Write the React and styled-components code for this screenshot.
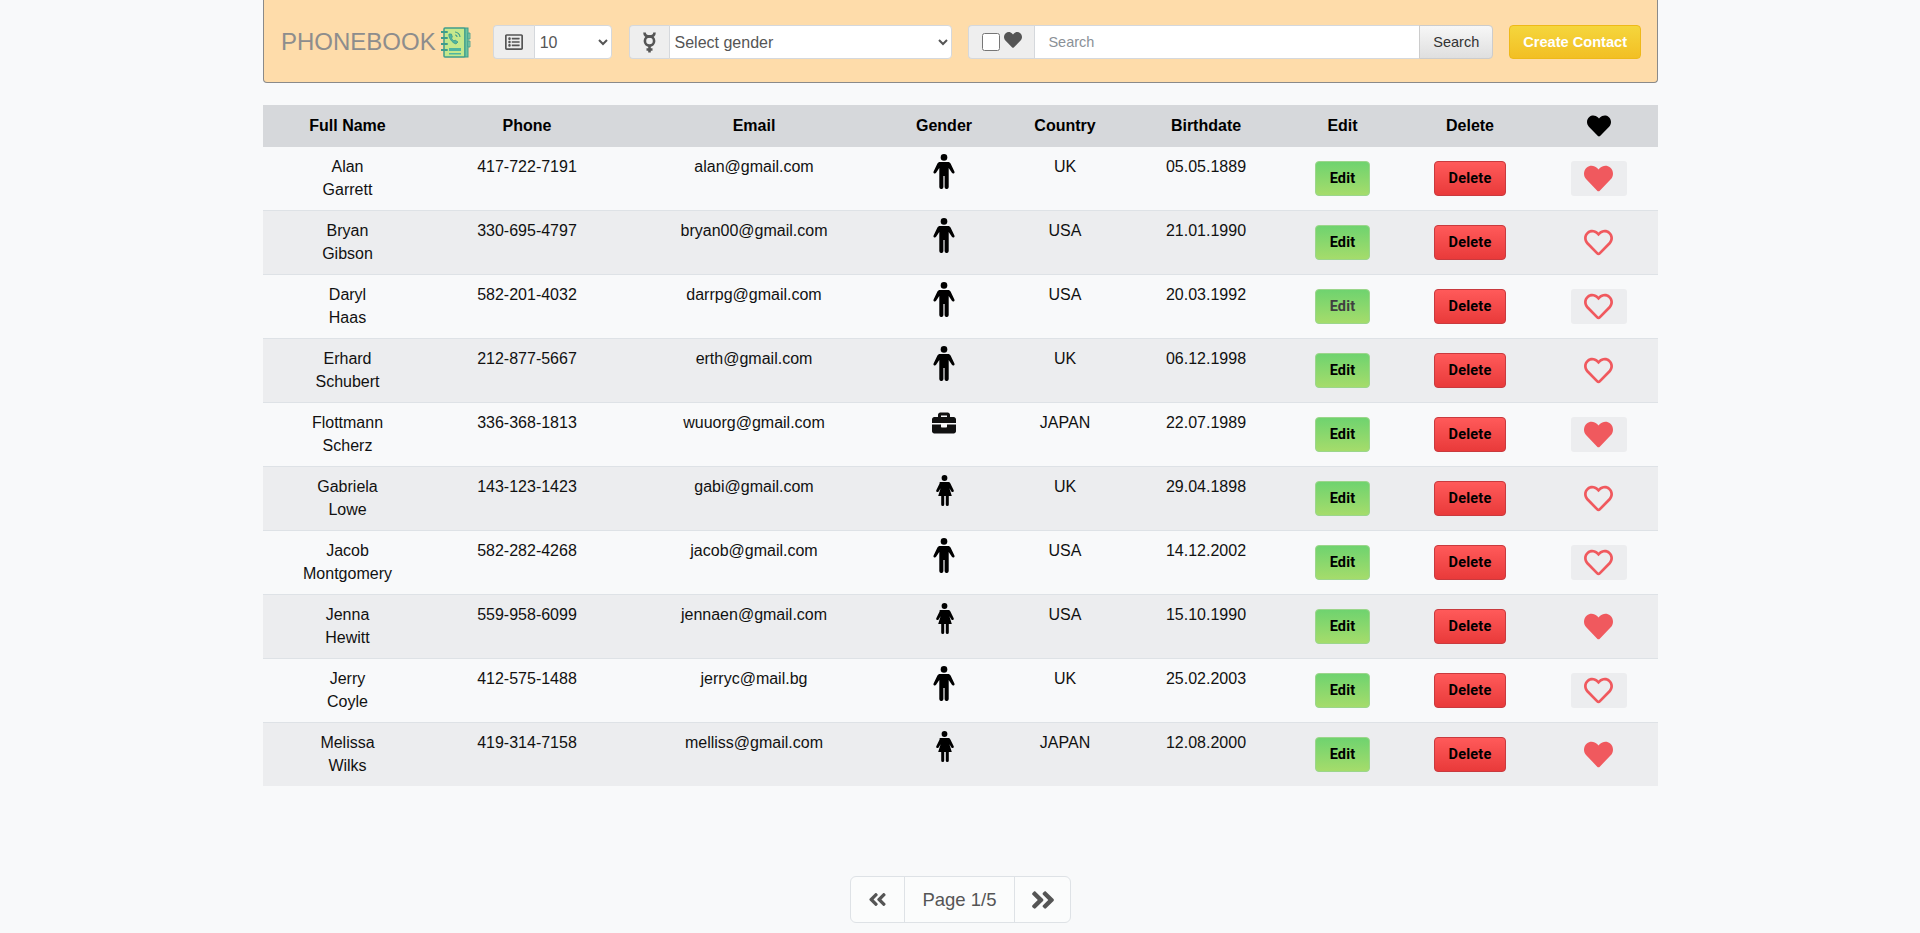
import React from 'react';
import styled, { createGlobalStyle } from 'styled-components';
import {
  FaRegListAlt,
  FaHeart,
  FaRegHeart,
  FaBriefcase,
  FaAngleDoubleLeft,
  FaAngleDoubleRight,
} from 'react-icons/fa';

const GlobalStyle = createGlobalStyle`
  html, body {
    margin: 0;
    padding: 0;
    background: #f8f9fa;
    font-family: "Liberation Sans", Arial, sans-serif;
    font-size: 16px;
    line-height: 1.5;
    color: #212529;
    overflow: hidden;
  }
`;

const Page = styled.div`
  width: 1395px;
  height: 933px;
  margin-left: 263px;
  display: flex;
  flex-direction: column;
`;

const Navbar = styled.nav`
  height: 83px;
  box-sizing: border-box;
  display: flex;
  align-items: center;
  padding: 2px 16px 0 17px;
  background: #fedcaa;
  border: 1px solid #8a8a8a;
  border-top: none;
  border-radius: 0 0 4px 4px;
`;

const Brand = styled.div`
  display: flex;
  align-items: center;
  gap: 5px;
  font-size: 24px;
  line-height: 30px;
  color: #8d8d8d;
  margin-right: 22px;
`;

const InputGroup = styled.div`
  display: flex;
  align-items: stretch;
  width: ${props => props.width}px;
  height: 34px;
  margin-right: ${props => props.gap}px;
  border-radius: 4px;
`;

const Addon = styled.div`
  width: ${props => props.width}px;
  box-sizing: border-box;
  flex: none;
  display: flex;
  align-items: center;
  justify-content: center;
  gap: ${props => props.gap || 0}px;
  background: #eeeeee;
  border: 1px solid #d5d8dc;
  border-right: none;
  border-radius: 4px 0 0 4px;
  color: #555;
  font-size: ${props => props.size || 16}px;
`;

const Select = styled.select`
  flex: 1;
  min-width: 0;
  height: 34px;
  box-sizing: border-box;
  padding: 0 0 0 1px;
  background: #fff;
  border: 1px solid #d5d8dc;
  border-radius: 0 4px 4px 0;
  font-family: inherit;
  font-size: 16px;
  color: #555;
  outline: none;
`;

const SearchInput = styled.input`
  flex: 1;
  min-width: 0;
  height: 34px;
  box-sizing: border-box;
  padding: 0 13px;
  background: #fff;
  border: 1px solid #d5d8dc;
  border-right: none;
  font-family: inherit;
  font-size: 14.5px;
  outline: none;

  &::placeholder {
    color: #8b9197;
    opacity: 1;
  }
`;

const SearchButton = styled.button`
  width: 74px;
  flex: none;
  padding: 0;
  background: linear-gradient(#f7f7f7, #dfdfdf);
  border: 1px solid #ccc;
  border-radius: 0 4px 4px 0;
  font-family: inherit;
  font-size: 14.5px;
  color: #333;
`;

const FavCheck = styled.input`
  width: 18px;
  height: 18px;
  margin: 0;
`;

const CreateButton = styled.button`
  width: 133px;
  height: 34px;
  padding: 0;
  background: linear-gradient(#f5d63d, #f2bf24);
  border: 1px solid #eeb919;
  border-radius: 4px;
  font-family: inherit;
  font-size: 14.6px;
  font-weight: 700;
  color: #fff;
`;

const Table = styled.table`
  width: 100%;
  margin-top: 22px;
  border-collapse: collapse;
  table-layout: fixed;
  text-align: center;
`;

const HeadRow = styled.tr`
  height: 42px;
  background: #d6d8db;
`;

const Th = styled.th`
  padding: 0 ${props => props.$right || 0}px 0 ${props => props.$left || 0}px;
  font-weight: 700;
  color: #000;
  vertical-align: middle;
`;

const Row = styled.tr`
  height: ${props => (props.$first ? 63 : 64)}px;
  background: ${props => (props.$striped ? '#ecedef' : 'transparent')};
  border-top: ${props => (props.$first ? 'none' : '1px solid #dee2e6')};
`;

const Td = styled.td`
  padding: 8px ${props => props.$right || 0}px 0 ${props => props.$left || 0}px;
  line-height: 23px;
  vertical-align: top;
  color: #111;
`;

const GenderCell = styled(Td)`
  padding-top: 7px;
  line-height: 0;
`;

const ActionCell = styled(Td)`
  padding-top: 14px;
  line-height: 0;
`;

const EditButton = styled.button`
  width: 55px;
  height: 35px;
  padding: 0;
  background: linear-gradient(#6fd36f, #a5dc6b);
  border: 1px solid #9bd68b;
  border-radius: 4px;
  font-family: Roboto, sans-serif;
  font-size: 14.5px;
  font-weight: 700;
  letter-spacing: 0.2px;
  color: ${props => (props.$muted ? '#404040' : '#000')};
`;

const DeleteButton = styled.button`
  width: 72px;
  height: 35px;
  padding: 0;
  background: linear-gradient(#ff5a5a, #e93a3a);
  border: 1px solid #c93a3e;
  border-radius: 4px;
  font-family: Roboto, sans-serif;
  font-size: 14.5px;
  font-weight: 700;
  letter-spacing: 0.2px;
  color: #000;
`;

const HeartButton = styled.button`
  width: 56px;
  height: 35px;
  padding: 0;
  display: inline-flex;
  align-items: center;
  justify-content: center;
  background: #ecedef;
  border: none;
  border-radius: 3px;
  color: #f0595e;
  font-size: 29px;
`;

const Pager = styled.div`
  align-self: center;
  display: flex;
  height: 47px;
  margin-top: 90px;
  box-sizing: border-box;
  border: 1px solid #dee2e6;
  border-radius: 6px;
  background: #fbfcfc;
  color: #555;
  font-size: 18.5px;
`;

const PagerArrow = styled.div`
  width: ${props => props.width}px;
  display: flex;
  align-items: center;
  justify-content: center;
  font-size: ${props => props.size}px;
`;

const PagerLabel = styled.div`
  width: 109px;
  display: flex;
  align-items: center;
  justify-content: center;
  border-left: 1px solid #dee2e6;
  border-right: 1px solid #dee2e6;
`;

const BookLogo = () => (
  <svg width="30" height="31" viewBox="0 0 30 31">
    <rect x="3" y="1" width="21" height="29" rx="1" fill="#c6e88c" stroke="#3f9c8c" strokeWidth="1.5" />
    <rect x="24" y="1" width="3" height="29" fill="#6cc4a0" stroke="#3f9c8c" strokeWidth="1" />
    <path d="M27 6h2v6h-2zM27 14h2v6h-2z" fill="#8ed0a8" stroke="#3f9c8c" strokeWidth="0.8" />
    <path d="M0 5h6M0 11h6M0 17h6M0 23h6" stroke="#3f9c8c" strokeWidth="2" strokeLinecap="round" />
    <path
      d="M8 7c-1 3 3 9 7 10l2-2-3-2-1 1c-1-.6-2.2-2-2.6-3l1-1-1-3z"
      fill="#4fb5a0"
      stroke="#3f9c8c"
      strokeWidth="0.8"
    />
    <path d="M14 5c2 0 5 2 5 5M14 8c1 0 2 1 2 2" fill="none" stroke="#3f9c8c" strokeWidth="1.1" />
    <rect x="8" y="21" width="12" height="3" fill="#4fb5a0" />
    <rect x="8" y="26" width="12" height="1.5" fill="#4fb5a0" />
  </svg>
);

const MercuryIcon = () => (
  <svg width="15" height="21" viewBox="0 0 15 21" fill="none" stroke="#555" strokeWidth="2.6">
    <path d="M2.500 0.500c0 2.600 2.200 4 5 4s5-1.400 5-4" />
    <circle cx="7.500" cy="9" r="4.600" />
    <path d="M7.500 13.500v7M4.500 17.500h6" />
  </svg>
);

const MaleIcon = () => (
  <svg width="22" height="35" viewBox="0 0 22 35" fill="#000">
    <circle cx="11" cy="3.400" r="3.300" />
    <path d="M7 8h8c1.200 0 2.100.6 2.700 1.700l3.700 7.700c.4.900.1 1.700-.7 2-.7.300-1.400 0-1.800-.7L15.700 14V33a1.800 1.800 0 0 1-4.100 0V22h-1.200v11a1.800 1.800 0 0 1-4.100 0V14l-3.200 4.700c-.4.700-1.100 1-1.800.7-.8-.3-1.100-1.100-.7-2l3.700-7.700C4.900 8.600 5.800 8 7 8z" />
  </svg>
);

const FemaleIcon = () => (
  <svg width="19" height="31" viewBox="0 0 19 31" fill="#000" style={{ marginTop: 1 }}>
    <circle cx="9.500" cy="3" r="2.900" />
    <path d="M6 7h7c1 0 1.900.5 2.400 1.400l3.300 6.800c.3.800 0 1.500-.7 1.800-.6.200-1.200 0-1.600-.6l-2-3.200 2.400 7.800h-3V29.500a1.500 1.500 0 0 1-3 0V21h-1.600v8.500a1.500 1.500 0 0 1-3 0V21h-3l2.400-7.800-2 3.200c-.4.600-1 .8-1.600.6-.7-.3-1-1-.7-1.800l3.300-6.800C4.100 7.500 5 7 6 7z" />
  </svg>
);

const contacts = [
  { first: 'Alan', last: 'Garrett', phone: '417-722-7191', email: 'alan@gmail.com', gender: 'm', country: 'UK', date: '05.05.1889', fav: true },
  { first: 'Bryan', last: 'Gibson', phone: '330-695-4797', email: 'bryan00@gmail.com', gender: 'm', country: 'USA', date: '21.01.1990', fav: false },
  { first: 'Daryl', last: 'Haas', phone: '582-201-4032', email: 'darrpg@gmail.com', gender: 'm', country: 'USA', date: '20.03.1992', fav: false, muted: true },
  { first: 'Erhard', last: 'Schubert', phone: '212-877-5667', email: 'erth@gmail.com', gender: 'm', country: 'UK', date: '06.12.1998', fav: false },
  { first: 'Flottmann', last: 'Scherz', phone: '336-368-1813', email: 'wuuorg@gmail.com', gender: 'b', country: 'JAPAN', date: '22.07.1989', fav: true },
  { first: 'Gabriela', last: 'Lowe', phone: '143-123-1423', email: 'gabi@gmail.com', gender: 'f', country: 'UK', date: '29.04.1898', fav: false },
  { first: 'Jacob', last: 'Montgomery', phone: '582-282-4268', email: 'jacob@gmail.com', gender: 'm', country: 'USA', date: '14.12.2002', fav: false },
  { first: 'Jenna', last: 'Hewitt', phone: '559-958-6099', email: 'jennaen@gmail.com', gender: 'f', country: 'USA', date: '15.10.1990', fav: true },
  { first: 'Jerry', last: 'Coyle', phone: '412-575-1488', email: 'jerryc@mail.bg', gender: 'm', country: 'UK', date: '25.02.2003', fav: false },
  { first: 'Melissa', last: 'Wilks', phone: '419-314-7158', email: 'melliss@gmail.com', gender: 'f', country: 'JAPAN', date: '12.08.2000', fav: true },
];

const columnWidths = [155, 218, 248, 120, 122, 160, 113, 142, 117];

const GenderIcon = ({ gender }) => {
  if (gender === 'm') return <MaleIcon />;
  if (gender === 'f') return <FemaleIcon />;
  return <FaBriefcase size={24} style={{ marginTop: 1 }} />;
};

export default function App() {
  return (
    <Page>
      <GlobalStyle />
      <Navbar>
        <Brand>
          PHONEBOOK
          <BookLogo />
        </Brand>
        <InputGroup width={120} gap={17}>
          <Addon width={41} size={18}>
            <FaRegListAlt />
          </Addon>
          <Select defaultValue="10">
            <option>10</option>
            <option>20</option>
            <option>50</option>
          </Select>
        </InputGroup>
        <InputGroup width={327} gap={16}>
          <Addon width={40}>
            <MercuryIcon />
          </Addon>
          <Select defaultValue="">
            <option value="">Select gender</option>
            <option value="m">Male</option>
            <option value="f">Female</option>
          </Select>
        </InputGroup>
        <InputGroup width={530} gap={16}>
          <Addon width={66} size={18} gap={4}>
            <FavCheck type="checkbox" />
            <FaHeart style={{ marginTop: -4 }} />
          </Addon>
          <SearchInput placeholder="Search" />
          <SearchButton>Search</SearchButton>
        </InputGroup>
        <CreateButton>Create Contact</CreateButton>
      </Navbar>

      <Table>
        <colgroup>
          {columnWidths.map((w, i) => (
            <col key={i} style={{ width: w }} />
          ))}
        </colgroup>
        <thead>
          <HeadRow>
            <Th $left={14}>Full Name</Th>
            <Th>Phone</Th>
            <Th $right={12}>Email</Th>
            <Th>Gender</Th>
            <Th>Country</Th>
            <Th>Birthdate</Th>
            <Th>Edit</Th>
            <Th>Delete</Th>
            <Th $right={2}>
              <FaHeart size={24} style={{ verticalAlign: 'middle' }} />
            </Th>
          </HeadRow>
        </thead>
        <tbody>
          {contacts.map((c, i) => (
            <Row key={c.email} $striped={i % 2 === 1} $first={i === 0}>
              <Td $left={14}>
                {c.first}
                <br />
                {c.last}
              </Td>
              <Td>{c.phone}</Td>
              <Td $right={12}>{c.email}</Td>
              <GenderCell>
                <GenderIcon gender={c.gender} />
              </GenderCell>
              <Td>{c.country}</Td>
              <Td>{c.date}</Td>
              <ActionCell>
                <EditButton $muted={c.muted}>Edit</EditButton>
              </ActionCell>
              <ActionCell>
                <DeleteButton>Delete</DeleteButton>
              </ActionCell>
              <ActionCell $right={2}>
                <HeartButton>{c.fav ? <FaHeart /> : <FaRegHeart />}</HeartButton>
              </ActionCell>
            </Row>
          ))}
        </tbody>
      </Table>

      <Pager>
        <PagerArrow width={53} size={21}>
          <FaAngleDoubleLeft />
        </PagerArrow>
        <PagerLabel>Page 1/5</PagerLabel>
        <PagerArrow width={55} size={28}>
          <FaAngleDoubleRight />
        </PagerArrow>
      </Pager>
    </Page>
  );
}
